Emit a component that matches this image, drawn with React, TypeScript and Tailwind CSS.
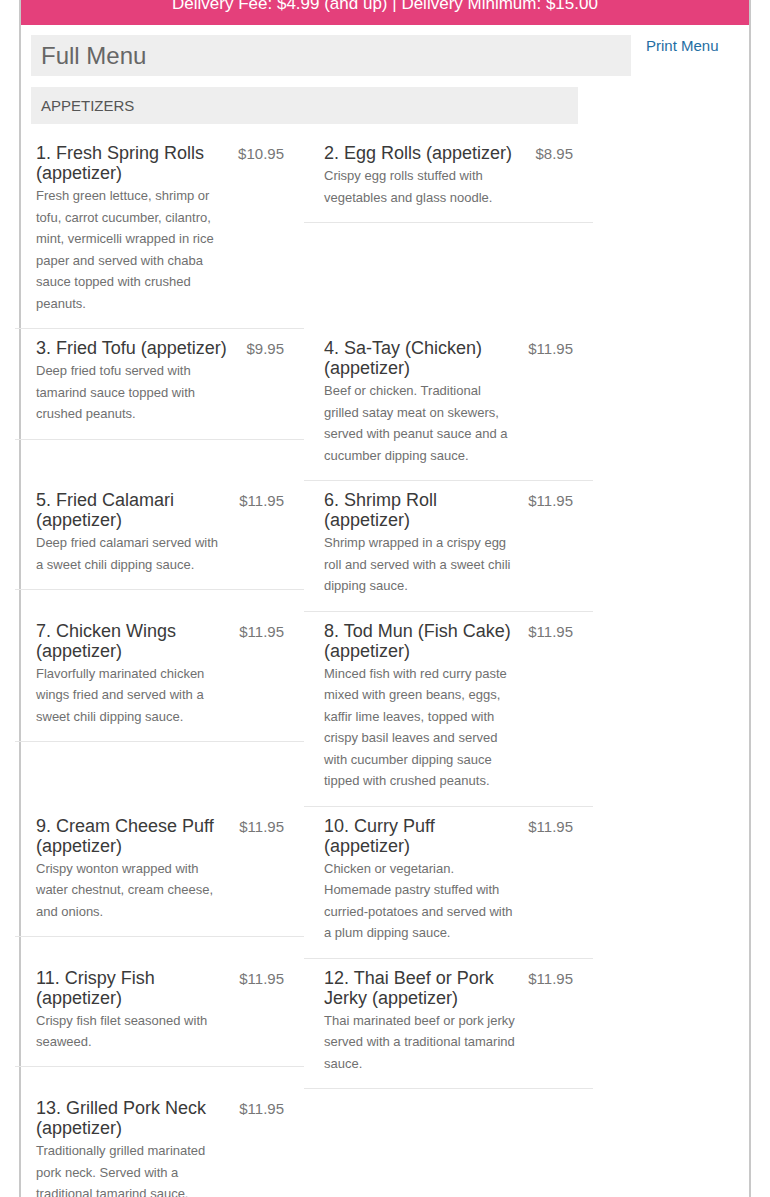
import React from "react";

type Item = { n: number; name: string; price: string; desc: string };

const items: Item[] = [
  { n: 1, name: "Fresh Spring Rolls (appetizer)", price: "$10.95", desc: "Fresh green lettuce, shrimp or tofu, carrot cucumber, cilantro, mint, vermicelli wrapped in rice paper and served with chaba sauce topped with crushed peanuts." },
  { n: 2, name: "Egg Rolls (appetizer)", price: "$8.95", desc: "Crispy egg rolls stuffed with vegetables and glass noodle." },
  { n: 3, name: "Fried Tofu (appetizer)", price: "$9.95", desc: "Deep fried tofu served with tamarind sauce topped with crushed peanuts." },
  { n: 4, name: "Sa-Tay (Chicken) (appetizer)", price: "$11.95", desc: "Beef or chicken. Traditional grilled satay meat on skewers, served with peanut sauce and a cucumber dipping sauce." },
  { n: 5, name: "Fried Calamari (appetizer)", price: "$11.95", desc: "Deep fried calamari served with a sweet chili dipping sauce." },
  { n: 6, name: "Shrimp Roll (appetizer)", price: "$11.95", desc: "Shrimp wrapped in a crispy egg roll and served with a sweet chili dipping sauce." },
  { n: 7, name: "Chicken Wings (appetizer)", price: "$11.95", desc: "Flavorfully marinated chicken wings fried and served with a sweet chili dipping sauce." },
  { n: 8, name: "Tod Mun (Fish Cake) (appetizer)", price: "$11.95", desc: "Minced fish with red curry paste mixed with green beans, eggs, kaffir lime leaves, topped with crispy basil leaves and served with cucumber dipping sauce tipped with crushed peanuts." },
  { n: 9, name: "Cream Cheese Puff (appetizer)", price: "$11.95", desc: "Crispy wonton wrapped with water chestnut, cream cheese, and onions." },
  { n: 10, name: "Curry Puff (appetizer)", price: "$11.95", desc: "Chicken or vegetarian. Homemade pastry stuffed with curried-potatoes and served with a plum dipping sauce." },
  { n: 11, name: "Crispy Fish (appetizer)", price: "$11.95", desc: "Crispy fish filet seasoned with seaweed." },
  { n: 12, name: "Thai Beef or Pork Jerky (appetizer)", price: "$11.95", desc: "Thai marinated beef or pork jerky served with a traditional tamarind sauce." },
  { n: 13, name: "Grilled Pork Neck (appetizer)", price: "$11.95", desc: "Traditionally grilled marinated pork neck. Served with a traditional tamarind sauce." },
];

function MenuItem({ item, left }: { item: Item; left: boolean }) {
  return (
    <div
      className={
        "flex items-start border-b border-[#e6e6e6] pr-[20px] pt-[9px] pb-[13.6px] " +
        (left ? "pl-[21px]" : "pl-[20px]")
      }
    >
      <div className="w-[196px] shrink-0">
        <div className="text-[18px] leading-[20px] text-[#3a3a3a]">
          {item.n}. {item.name}
        </div>
        <div className="mt-[2px] w-[192px] text-[13px] leading-[21.6px] text-[#707070]">{item.desc}</div>
      </div>
      <div className="flex-1 text-right text-[15px] leading-[20px] pt-[1px] text-[#777]">{item.price}</div>
    </div>
  );
}

export default function App() {
  return (
    <div
      className="min-h-[1197px] bg-white"
      style={{ fontFamily: '"Liberation Sans", Arial, sans-serif' }}
    >
      <div className="ml-[19px] w-[732px] min-h-[1197px] border-x-2 border-[#c8c8c8]">
        <div className="h-[25px] overflow-hidden bg-[#e4407b]">
          <div className="mt-[-6px] text-center text-[17px] leading-[20px] text-white">
            Delivery Fee: $4.99 (and up) | Delivery Minimum: $15.00
          </div>
        </div>
        <div className="flex gap-[15px] pl-[10px] pt-[10px]">
          <div className="w-[600px] shrink-0">
            <div className="h-[41px] bg-[#eeeeee] pl-[10px] pt-[1px] flex items-center text-[24px] text-[#666]">
              Full Menu
            </div>
            <div className="mt-[11px] w-[547px] h-[37px] bg-[#eeeeee] pl-[10px] pt-[1px] flex items-center text-[15px] text-[#555] uppercase">
              Appetizers
            </div>
            <div className="ml-[-16px] mt-[10px] grid grid-cols-[289px_289px] items-start">
              {items.map((it, i) => (
                <MenuItem key={it.n} item={it} left={i % 2 === 0} />
              ))}
            </div>
          </div>
          <div className="pt-[1px] text-[15px] leading-[20px] text-[#1f6ea3]">Print Menu</div>
        </div>
      </div>
    </div>
  );
}
